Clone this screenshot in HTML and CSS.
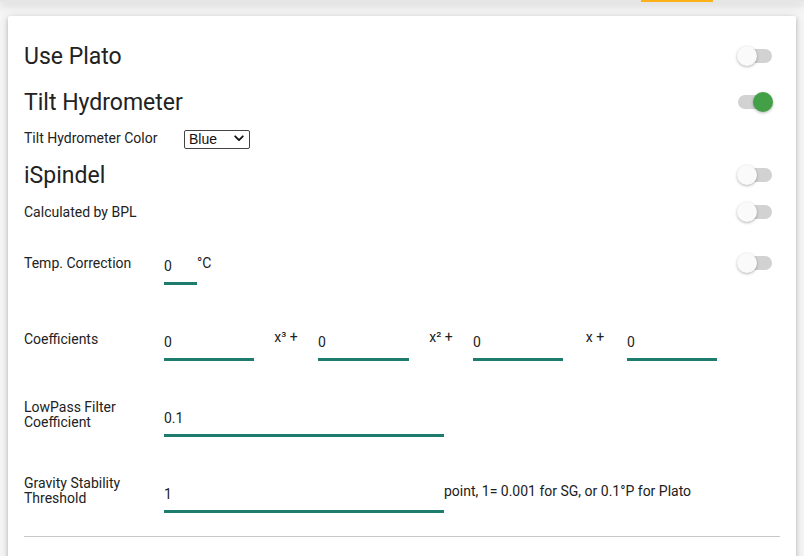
FILE: index.html
```html
<!DOCTYPE html>
<html>
<head>
<meta charset="utf-8">
<link rel="stylesheet" href="styles.css">
</head>
<body>
<div class="topbar"><div class="tab-ind"></div></div>
<div class="card">
  <div class="row head">
    <span class="title">Use Plato</span>
    <span class="switch"><span class="track"></span><span class="thumb"></span></span>
  </div>
  <div class="row head">
    <span class="title">Tilt Hydrometer</span>
    <span class="switch on"><span class="track"></span><span class="thumb"></span></span>
  </div>
  <div class="row small">
    <span class="lbl wide">Tilt Hydrometer Color</span>
    <span class="selwrap">
      <select class="sel"><option>Blue</option></select>
      <svg class="chev" width="10" height="7" viewBox="0 0 10 7"><path d="M1.2 1.3 L5 5.1 L8.8 1.3" fill="none" stroke="#111" stroke-width="1.8" stroke-linecap="round" stroke-linejoin="round"/></svg>
    </span>
  </div>
  <div class="row head tall">
    <span class="title">iSpindel</span>
    <span class="switch"><span class="track"></span><span class="thumb"></span></span>
  </div>
  <div class="row small">
    <span class="lbl">Calculated by BPL</span>
    <span class="switch"><span class="track"></span><span class="thumb"></span></span>
  </div>
  <div class="field">
    <span class="flabel">Temp. Correction</span>
    <div class="fbody">
      <input class="tf w33" value="0">
      <span class="suffix">°C</span>
    </div>
    <span class="switch"><span class="track"></span><span class="thumb"></span></span>
  </div>
  <div class="field">
    <span class="flabel">Coefficients</span>
    <div class="fbody">
      <input class="tf w90" value="0">
      <span class="op">x³ +</span>
      <input class="tf w91" value="0">
      <span class="op">x² +</span>
      <input class="tf w90" value="0">
      <span class="op">x +</span>
      <input class="tf w90" value="0">
    </div>
  </div>
  <div class="field">
    <span class="flabel">LowPass Filter<br>Coefficient</span>
    <div class="fbody">
      <input class="tf w280" value="0.1">
    </div>
  </div>
  <div class="field">
    <span class="flabel">Gravity Stability<br>Threshold</span>
    <div class="fbody">
      <input class="tf w280" value="1">
      <span class="note">point, 1= 0.001 for SG, or 0.1°P for Plato</span>
    </div>
  </div>
  <hr class="sep">
</div>
</body>
</html>
```
FILE: styles.css
```css
html, body {
  margin: 0;
  padding: 0;
  background: #f5f5f5;
  font-family: Roboto, "Liberation Sans", sans-serif;
  color: #212121;
  overflow: hidden;
}
.topbar {
  height: 2px;
  box-shadow: 0 2px 8px rgba(0,0,0,0.35);
  background: #e6e6e6;
  position: relative;
  z-index: 2;
}
.tab-ind {
  margin-left: 641px;
  width: 72px;
  height: 2px;
  background: #fbb117;
}
.card {
  margin: 14px 8px 0 8px;
  background: #fff;
  padding: 17px 16px 40px 16px;
  box-shadow: 0 2px 4px rgba(0,0,0,0.2), 0 1px 10px rgba(0,0,0,0.12);
  border-radius: 2px;
}
.row {
  display: flex;
  align-items: center;
}
.head { height: 46px; }
.head.tall { height: 48px; }
.small { height: 26px; }
.title {
  flex: 1;
  font-size: 23px;
  color: #222;
}
.lbl {
  font-size: 14px;
  color: #222;
  flex: 1;
}
.lbl.wide {
  flex: 0 0 160px;
}
.switch {
  position: relative;
  width: 36px;
  height: 20px;
  margin-right: 7px;
  flex: 0 0 36px;
}
.switch .track {
  position: absolute;
  left: 1px;
  right: 1px;
  top: 3px;
  height: 14px;
  border-radius: 7px;
  background: #d2d2d2;
}
.switch .thumb {
  position: absolute;
  left: 0;
  top: 0;
  width: 20px;
  height: 20px;
  border-radius: 50%;
  background: #fafafa;
  box-shadow: 0 1px 3px rgba(0,0,0,0.3);
}
.switch.on .thumb {
  left: 16px;
  background: #43a047;
}
.selwrap {
  position: relative;
  display: inline-block;
  width: 66px;
  height: 19px;
}
.sel {
  -webkit-appearance: none;
  appearance: none;
  width: 66px;
  height: 19px;
  margin: 0;
  border: 1px solid #444;
  border-radius: 2px;
  background: #fff;
  font-family: "Liberation Sans", Arial, sans-serif;
  font-size: 14px;
  color: #111;
  padding: 0 0 0 4px;
  box-sizing: border-box;
  line-height: 17px;
}
.chev {
  position: absolute;
  right: 6px;
  top: 6px;
}
.field {
  height: 76px;
  display: flex;
  align-items: center;
}
.flabel {
  flex: 0 0 140px;
  font-size: 14px;
  line-height: 15px;
  color: #222;
}
.fbody {
  flex: 1;
  display: flex;
  align-items: center;
}
.tf {
  box-sizing: border-box;
  height: 43px;
  border: none;
  border-bottom: 3px solid #1d7c6e;
  padding: 16px 0 7px 0;
  margin: 0;
  font-family: Roboto, sans-serif;
  font-size: 14px;
  line-height: 17px;
  color: #222;
  background: transparent;
  outline: none;
}
.w33 { width: 33px; }
.w90 { width: 90px; }
.w91 { width: 91px; }
.w280 { width: 280px; }
.suffix {
  font-size: 14px;
  align-self: flex-start;
  margin-top: 13px;
  margin-left: 0;
}
.op {
  width: 64px;
  text-align: center;
  font-size: 14px;
  margin-top: -4px;
}
.note {
  font-size: 14px;
  margin-top: -1px;
}
.sep {
  margin: 7px 0 0 0;
  border: none;
  border-top: 1px solid #c8c8c8;
  height: 0;
}
```
